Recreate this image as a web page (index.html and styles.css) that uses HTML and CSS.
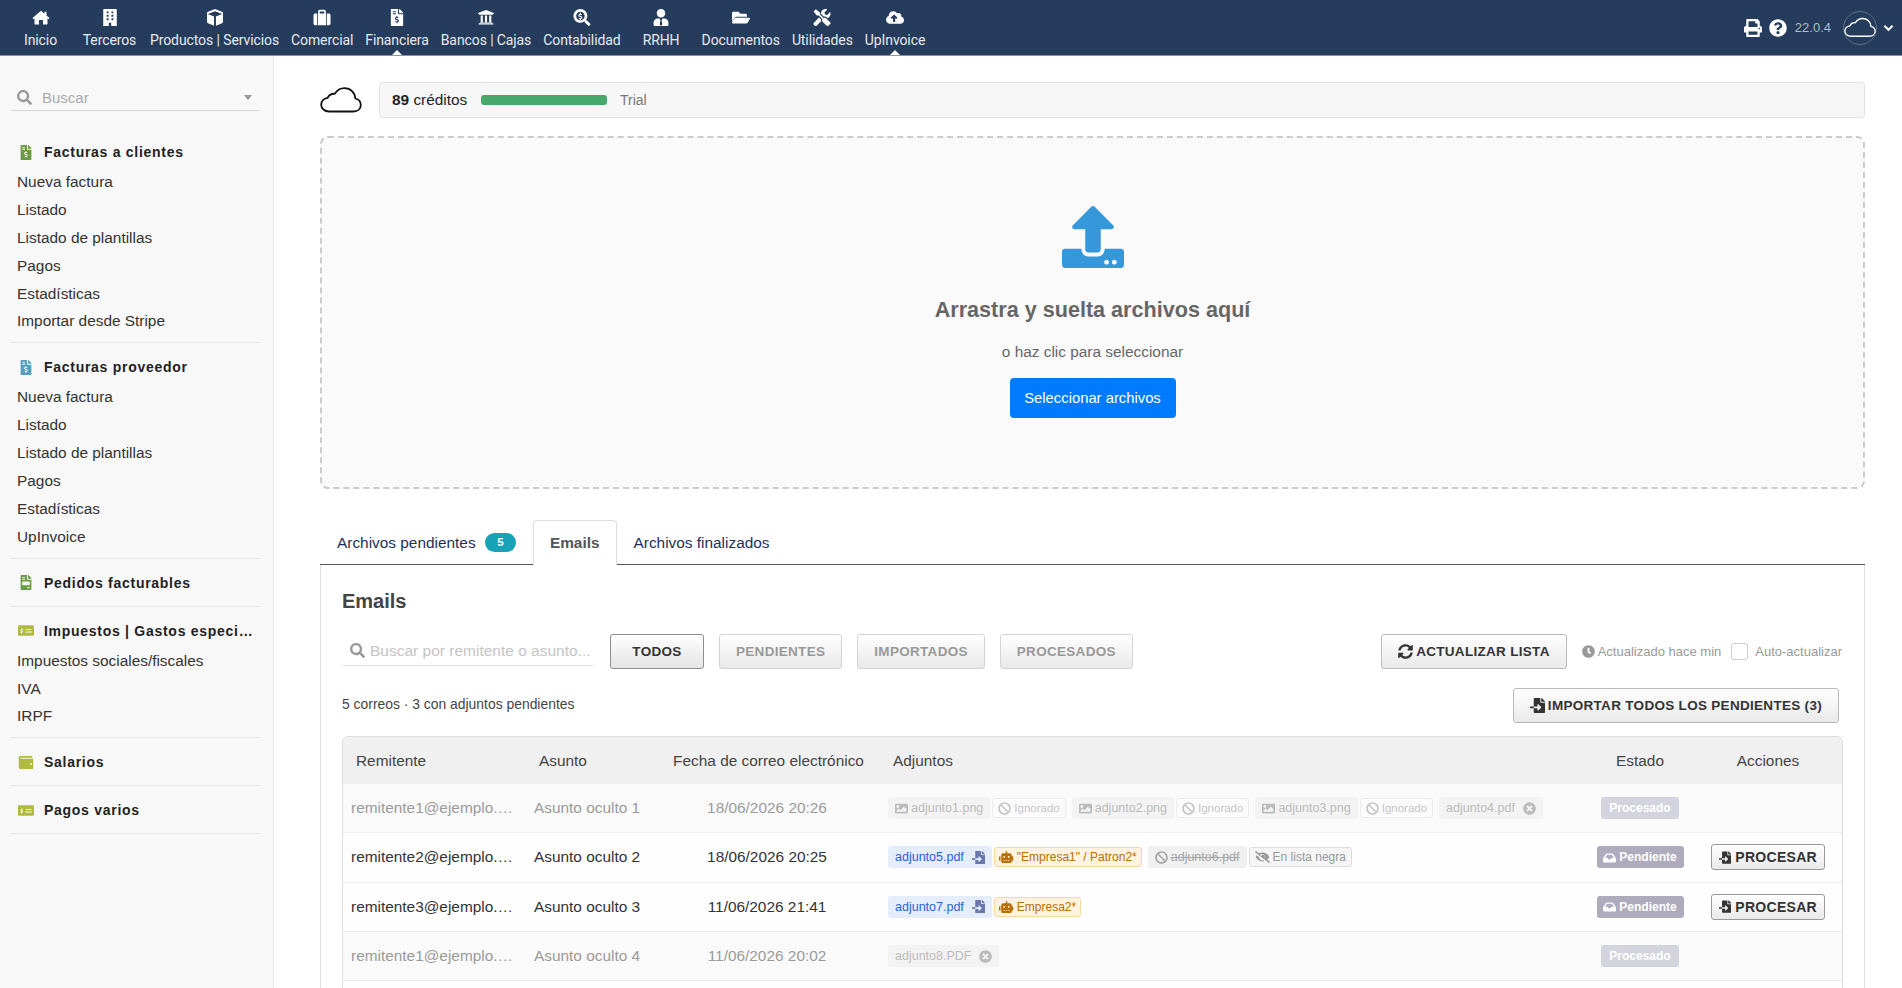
FILE: index.html
```html
<!DOCTYPE html>
<html lang="es">
<head>
    <meta charset="UTF-8">
    <title>UpInvoice - Emails</title>
    <link rel="stylesheet" href="styles.css">
</head>
<body>
    <svg class="icon-defs" width="0" height="0">
        <defs>
            <symbol id="i-file-dollar" viewBox="0 0 384 512"><path d="M377 105L279 7c-4-4-11-7-17-7h-6v128h128v-6c0-6-2-13-7-17zM224 136V0H24C11 0 0 11 0 24v464c0 13 11 24 24 24h336c13 0 24-11 24-24V160H248c-13 0-24-11-24-24zM64 72c0-4 4-8 8-8h80c4 0 8 4 8 8v16c0 4-4 8-8 8H72c-4 0-8-4-8-8V72zm0 64c0-4 4-8 8-8h80c4 0 8 4 8 8v16c0 4-4 8-8 8H72c-4 0-8-4-8-8v-16zm144 263v24c0 4-4 8-8 8h-16c-4 0-8-4-8-8v-24c-11-1-22-5-32-11-3-2-4-7-1-10l12-11c2-3 6-3 9-1 4 2 8 3 12 3h28c7 0 12-6 12-13 0-6-4-11-9-12l-45-14c-19-5-32-23-32-43 0-24 19-44 42-44v-24c0-4 4-8 8-8h16c4 0 8 4 8 8v24c11 1 22 5 32 11 3 2 4 7 1 10l-12 11c-2 3-6 3-9 1-4-2-8-3-12-3h-28c-7 0-12 6-12 13 0 6 4 11 9 12l45 14c19 5 32 23 32 43 0 24-19 44-42 44z"/></symbol>
            <symbol id="i-file-lines" viewBox="0 0 384 512"><path d="M377 105L279 7c-4-4-11-7-17-7h-6v128h128v-6c0-6-2-13-7-17zM224 136V0H24C11 0 0 11 0 24v464c0 13 11 24 24 24h336c13 0 24-11 24-24V160H248c-13 0-24-11-24-24zM64 72c0-4 4-8 8-8h80c4 0 8 4 8 8v16c0 4-4 8-8 8H72c-4 0-8-4-8-8V72zm0 64c0-4 4-8 8-8h80c4 0 8 4 8 8v16c0 4-4 8-8 8H72c-4 0-8-4-8-8v-16zM64 240c0-9 7-16 16-16h224c9 0 16 7 16 16v96c0 9-7 16-16 16H80c-9 0-16-7-16-16v-96zm256 200c0 4-4 8-8 8h-80c-4 0-8-4-8-8v-16c0-4 4-8 8-8h80c4 0 8 4 8 8v16z"/></symbol>
            <symbol id="i-money" viewBox="0 0 576 512"><path d="M528 64H48C21 64 0 85 0 112v288c0 27 21 48 48 48h480c27 0 48-21 48-48V112c0-27-21-48-48-48zM160 336h-16v16c0 4-4 8-8 8h-16c-4 0-8-4-8-8v-16H96c-4 0-8-4-8-8v-16c0-4 4-8 8-8h64c5 0 8-3 8-8s-3-8-8-8h-32c-22 0-40-18-40-40s18-40 40-40v-16c0-4 4-8 8-8h16c4 0 8 4 8 8v16h16c4 0 8 4 8 8v16c0 4-4 8-8 8h-64c-5 0-8 3-8 8s3 8 8 8h32c22 0 40 18 40 40s-18 40-40 40zm336-16c0 4-4 8-8 8H272c-4 0-8-4-8-8v-16c0-4 4-8 8-8h216c4 0 8 4 8 8v16zm0-96c0 4-4 8-8 8H272c-4 0-8-4-8-8v-16c0-4 4-8 8-8h216c4 0 8 4 8 8v16z"/></symbol>
            <symbol id="i-wallet" viewBox="0 0 512 512"><path d="M461 128H80c-9 0-16-7-16-16s7-16 16-16h384c9 0 16-7 16-16 0-27-21-48-48-48H64C29 32 0 61 0 96v320c0 35 29 64 64 64h397c28 0 51-22 51-48V176c0-26-23-48-51-48zm-29 208c-18 0-32-14-32-32s14-32 32-32 32 14 32 32-14 32-32 32z"/></symbol>
            <symbol id="i-file-import" viewBox="0 0 512 512"><path d="M16 288c-9 0-16 7-16 16v32c0 9 7 16 16 16h112v-64H16zm489-183L407 7c-5-4-11-7-17-7h-6v128h128v-6c0-6-2-13-7-17zm-153 31V0H152c-13 0-24 11-24 24v264h128v-65c0-14 17-21 27-11l96 96c6 6 6 17 0 23l-96 96c-10 10-27 3-27-11v-64H128v136c0 13 11 24 24 24h336c13 0 24-11 24-24V160H376c-13 0-24-11-24-24z"/></symbol>
            <symbol id="i-image" viewBox="0 0 512 512"><path d="M464 448H48c-27 0-48-21-48-48V112c0-27 21-48 48-48h416c27 0 48 21 48 48v288c0 27-21 48-48 48zM112 120c-31 0-56 25-56 56s25 56 56 56 56-25 56-56-25-56-56-56zM64 384h384V272l-88-88c-5-5-12-5-17 0L208 320l-56-56c-5-5-12-5-17 0l-71 72v48z"/></symbol>
            <symbol id="i-ban" viewBox="0 0 512 512"><path d="M256 8C119 8 8 119 8 256s111 248 248 248 248-111 248-248S393 8 256 8zm130 118c65 65 70 165 21 236L150 105c71-49 171-44 236 21zM126 386c-65-65-70-165-21-236l257 257c-71 49-171 44-236-21z"/></symbol>
            <symbol id="i-x-circle" viewBox="0 0 512 512"><path d="M256 8C119 8 8 119 8 256s111 248 248 248 248-111 248-248S393 8 256 8zm122 313c5 5 5 12 0 17l-40 40c-5 5-12 5-17 0l-65-66-65 66c-5 5-12 5-17 0l-40-40c-5-5-5-12 0-17l66-65-66-65c-5-5-5-12 0-17l40-40c5-5 12-5 17 0l65 66 65-66c5-5 12-5 17 0l40 40c5 5 5 12 0 17l-66 65z"/></symbol>
            <symbol id="i-robot" viewBox="0 0 640 512"><path d="M32 224h32v192H32c-18 0-32-14-32-32V256c0-18 14-32 32-32zm512-48v272c0 35-29 64-64 64H160c-35 0-64-29-64-64V176c0-44 36-80 80-80h112V32c0-18 14-32 32-32s32 14 32 32v64h112c44 0 80 36 80 80zM264 256c0-22-18-40-40-40s-40 18-40 40 18 40 40 40 40-18 40-40zm-8 128h-64v32h64v-32zm96 0h-64v32h64v-32zm104-128c0-22-18-40-40-40s-40 18-40 40 18 40 40 40 40-18 40-40zm-8 128h-64v32h64v-32zm160-128v128c0 18-14 32-32 32h-32V224h32c18 0 32 14 32 32z"/></symbol>
            <symbol id="i-eye-slash" viewBox="0 0 640 512"><path d="M320 400c-76 0-137-59-143-133L72 186c-14 17-27 36-37 56-5 10-5 19 0 29 54 106 161 177 285 177 27 0 53-4 78-10l-52-40c-9 1-17 2-26 2zm314 58L524 372c33-28 61-63 81-101 5-10 5-19 0-29-54-106-161-177-285-177-52 0-101 13-145 36L45 3c-7-5-17-4-22 3L3 31c-5 7-4 17 3 23l591 455c7 5 17 4 22-3l20-25c5-7 4-17-3-23zM450 316l-39-31c3-9 5-19 5-29 0-53-43-96-96-96-13 0-24 3-35 7l-8 9c4 8 6 16 6 24 0 7-1 14-3 20l-73-56c22-19 50-31 82-31 79 0 144 64 144 143 0 15-2 28-7 41z"/></symbol>
            <symbol id="i-inbox" viewBox="0 0 576 512"><path d="M568 276L448 96c-9-13-24-21-40-21H168c-16 0-31 8-40 21L8 276c-5 8-8 17-8 27v122c0 26 21 47 48 47h480c27 0 48-21 48-47V303c0-10-3-19-8-27zM178 139h220l85 128H376l-32 64H232l-32-64H93l85-128z"/></symbol>
        </defs>
    </svg>

    <header class="top-bar">
        <nav class="top-menu">
            <a class="menu-item">
                <svg class="menu-icon" viewBox="0 0 576 512"><path d="M288 40L16 272l32 36 32-28v184c0 9 7 16 16 16h128V336h128v144h128c9 0 16-7 16-16V280l32 28 32-36-96-82V72h-64v64z"/></svg>
                <span>Inicio</span>
            </a>
            <a class="menu-item">
                <svg class="menu-icon" viewBox="0 0 448 512"><path d="M44 0C31 0 20 11 20 24v488h168v-96h72v96h168V24c0-13-11-24-24-24zm80 72h56v56h-56zm144 0h56v56h-56zm-144 104h56v56h-56zm144 0h56v56h-56zm-144 104h56v56h-56zm144 0h56v56h-56z" fill-rule="evenodd"/></svg>
                <span>Terceros</span>
            </a>
            <a class="menu-item">
                <svg class="menu-icon" viewBox="0 0 512 512"><path d="M239 8L48 80c-19 7-32 25-32 45v262c0 18 10 35 27 43l184 75V226L40 150l216-84 216 84-187 76v279l184-75c17-8 27-25 27-43V125c0-20-13-38-32-45L273 8c-11-4-23-4-34 0z"/></svg>
                <span>Productos | Servicios</span>
            </a>
            <a class="menu-item">
                <svg class="menu-icon" viewBox="0 0 512 512"><path d="M140 136V72c0-26 21-48 48-48h136c27 0 48 22 48 48v64h92c26 0 48 22 48 48v256c0 27-22 48-48 48H400V136h-24v352H136V136h-24v352H48c-26 0-48-21-48-48V184c0-26 22-48 48-48zm48 0h136V72H188z"/></svg>
                <span>Comercial</span>
            </a>
            <a class="menu-item has-caret">
                <svg class="menu-icon" viewBox="0 0 384 512"><use href="#i-file-dollar"/></svg>
                <span>Financiera</span>
            </a>
            <a class="menu-item">
                <svg class="menu-icon" viewBox="0 0 512 512"><path d="M496 128v16c0 4-4 8-8 8h-24v12c0 7-5 12-12 12H60c-7 0-12-5-12-12v-12H24c-4 0-8-4-8-8v-16c0-3 2-6 5-7L253 33c2-1 4-1 6 0l232 88c3 1 5 4 5 7zM464 432H48c-9 0-16 7-16 16v16h448v-16c0-9-7-16-16-16zM96 192v208h-24v16h368v-16h-24V192h-64v208h-64V192h-64v208h-64V192z"/></svg>
                <span>Bancos | Cajas</span>
            </a>
            <a class="menu-item">
                <svg class="menu-icon" viewBox="0 0 512 512"><path d="M505 443L405 343c-4-4-10-7-17-7h-16c28-35 44-80 44-128C416 93 323 0 208 0S0 93 0 208s93 208 208 208c48 0 93-16 128-44v16c0 7 3 13 7 17l100 100c9 9 24 9 34 0l28-28c9-10 9-25 0-34zM208 336c-71 0-128-57-128-128S137 80 208 80s128 57 128 128-57 128-128 128zm27-120l-45-14c-5-1-9-6-9-12 0-7 5-12 12-12h28c4 0 8 1 12 3 3 2 7 2 9-1l12-11c3-3 2-8-1-10-10-6-21-10-32-11v-24c0-4-4-8-8-8h-16c-4 0-8 4-8 8v24c-23 0-42 20-42 44 0 20 13 38 32 43l45 14c5 1 9 6 9 12 0 7-5 12-12 12h-28c-4 0-8-1-12-3-3-2-7-2-9 1l-12 11c-3 3-2 8 1 10 10 6 21 10 32 11v24c0 4 4 8 8 8h16c4 0 8-4 8-8v-24c23 0 42-20 42-44 0-20-13-38-32-43z"/></svg>
                <span>Contabilidad</span>
            </a>
            <a class="menu-item">
                <svg class="menu-icon" viewBox="0 0 448 512"><path d="M224 256c71 0 128-57 128-128S295 0 224 0 96 57 96 128s57 128 128 128zm96 32l-48 0-32 48 24 120-40 56-40-56 24-120-32-48h-48C57 288 0 345 0 416v48c0 27 21 48 48 48h352c27 0 48-21 48-48v-48c0-71-57-128-128-128z"/></svg>
                <span>RRHH</span>
            </a>
            <a class="menu-item">
                <svg class="menu-icon" viewBox="0 0 576 512"><path d="M572 292l-72 124c-9 15-25 24-42 24H24c-19 0-30-20-21-36l72-124c9-15 25-24 42-24h434c19 0 30 20 21 36zM128 224h352v-48c0-27-21-48-48-48H272l-64-64H48C21 64 0 85 0 112v278l69-119c17-29 48-47 82-47z" transform="translate(0 8)"/></svg>
                <span>Documentos</span>
            </a>
            <a class="menu-item">
                <svg class="menu-icon" viewBox="0 0 512 512"><path d="M502 402L385 285c-23-23-57-28-85-14L194 165V104L67 8 3 72l96 127h61l106 106c-13 28-9 62 14 85l117 117c15 15 38 15 52 0l53-53c14-14 14-37 0-52zM332 225c28 0 55 11 75 31l19 20c16-7 31-17 44-30 37-37 50-90 37-138-2-9-14-12-20-5l-75 74-68-11-11-68 74-75c7-6 4-18-5-20-48-13-101 0-138 37-29 29-42 66-41 103l82 82c9-1 18 0 27 0zM224 315l-57-57L14 411c-19 19-19 49 0 68l20 20c19 19 49 19 68 0l134-135c-10-15-14-32-12-49z"/></svg>
                <span>Utilidades</span>
            </a>
            <a class="menu-item has-caret">
                <svg class="menu-icon" viewBox="0 0 640 512"><path d="M538 222c4-10 6-20 6-30 0-53-43-96-96-96-20 0-38 6-53 16-28-48-79-80-139-80-88 0-160 72-160 160v8C40 219 0 273 0 336c0 80 64 144 144 144h368c71 0 128-57 128-128 0-62-45-114-102-130zM393 288h-65v112c0 9-7 16-16 16h-48c-9 0-16-7-16-16V288h-65c-15 0-22-17-12-28l105-105c6-6 16-6 22 0l105 105c10 11 3 28-10 28z"/></svg>
                <span>UpInvoice</span>
            </a>
        </nav>
        <div class="top-right">
            <svg class="top-icon" viewBox="0 0 512 512"><path d="M448 192V77c0-8-3-17-9-23L393 9c-6-6-14-9-23-9H96C78 0 64 14 64 32v160c-35 0-64 29-64 64v112c0 9 7 16 16 16h48v96c0 18 14 32 32 32h320c18 0 32-14 32-32v-96h48c9 0 16-7 16-16V256c0-35-29-64-64-64zm-64 256H128v-96h256zm0-224H128V64h192v48c0 9 7 16 16 16h48zm48 72c-13 0-24-11-24-24s11-24 24-24 24 11 24 24-11 24-24 24z"/></svg>
            <svg class="top-icon" viewBox="0 0 512 512"><path d="M504 256c0 137-111 248-248 248S8 393 8 256 119 8 256 8s248 111 248 248zM263 90c-55 0-89 23-116 63-4 5-3 12 2 16l35 26c5 4 13 3 17-2 18-23 30-36 57-36 20 0 45 13 45 33 0 15-13 23-33 34-24 13-55 30-55 71v4c0 7 5 12 12 12h56c7 0 12-5 12-12v-1c0-29 83-30 83-107 0-58-60-101-115-101zm-7 248c-25 0-46 21-46 46s21 46 46 46 46-21 46-46-21-46-46-46z"/></svg>
            <span class="version">22.0.4</span>
            <span class="avatar">
                <svg viewBox="0 0 42 26"><path d="M9 24.500C4.500 24.500 1.200 21.500 1.200 17.800C1.200 14.300 3.800 11.500 7.600 10.800C9.200 7.800 11.800 6.400 14.800 6.800C17 3.200 20.400 1.200 24.500 1.200C30.500 1.200 35 5.500 35.300 11.500C38.600 12.300 40.800 14.800 40.800 18C40.800 21.800 37.800 24.500 33.500 24.500Z" fill="none" stroke="#fff" stroke-width="1.700" stroke-linejoin="round"/></svg>
            </span>
            <svg class="chevron" viewBox="0 0 12 8"><path d="M1.500 1.500L6 6l4.500-4.500" fill="none" stroke="#fff" stroke-width="2.200"/></svg>
        </div>
    </header>

    <div class="layout">
        <aside class="sidebar">
            <div class="side-search">
                <svg class="side-search-icon" viewBox="0 0 512 512"><path d="M505 443L405 343c-4-4-10-7-17-7h-16c28-35 44-80 44-128C416 93 323 0 208 0S0 93 0 208s93 208 208 208c48 0 93-16 128-44v16c0 7 3 13 7 17l100 100c9 9 24 9 34 0l28-28c9-10 9-25 0-34zM208 336c-71 0-128-57-128-128S137 80 208 80s128 57 128 128-57 128-128 128z"/></svg>
                <span class="side-search-text">Buscar</span>
                <span class="side-search-caret"></span>
            </div>

            <section class="side-group">
                <div class="side-title"><svg class="side-icon green" viewBox="0 0 384 512"><use href="#i-file-dollar"/></svg><span>Facturas a clientes</span></div>
                <a class="side-link">Nueva factura</a>
                <a class="side-link">Listado</a>
                <a class="side-link">Listado de plantillas</a>
                <a class="side-link">Pagos</a>
                <a class="side-link">Estadísticas</a>
                <a class="side-link">Importar desde Stripe</a>
            </section>
            <section class="side-group">
                <div class="side-title"><svg class="side-icon blue" viewBox="0 0 384 512"><use href="#i-file-dollar"/></svg><span>Facturas proveedor</span></div>
                <a class="side-link">Nueva factura</a>
                <a class="side-link">Listado</a>
                <a class="side-link">Listado de plantillas</a>
                <a class="side-link">Pagos</a>
                <a class="side-link">Estadísticas</a>
                <a class="side-link">UpInvoice</a>
            </section>
            <section class="side-group">
                <div class="side-title"><svg class="side-icon green" viewBox="0 0 384 512"><use href="#i-file-lines"/></svg><span>Pedidos facturables</span></div>
            </section>
            <section class="side-group">
                <div class="side-title"><svg class="side-icon olive" viewBox="0 0 576 512"><use href="#i-money"/></svg><span>Impuestos | Gastos especiales</span></div>
                <a class="side-link">Impuestos sociales/fiscales</a>
                <a class="side-link">IVA</a>
                <a class="side-link">IRPF</a>
            </section>
            <section class="side-group">
                <div class="side-title"><svg class="side-icon olive" viewBox="0 0 512 512"><use href="#i-wallet"/></svg><span>Salarios</span></div>
            </section>
            <section class="side-group">
                <div class="side-title"><svg class="side-icon olive" viewBox="0 0 576 512"><use href="#i-money"/></svg><span>Pagos varios</span></div>
            </section>
        </aside>

        <main class="content">
            <div class="credits-row">
                <svg class="credits-cloud" viewBox="0 0 42 26"><path d="M9 24.500C4.500 24.500 1.200 21.500 1.200 17.800C1.200 14.300 3.800 11.500 7.600 10.800C9.200 7.800 11.800 6.400 14.800 6.800C17 3.200 20.400 1.200 24.500 1.200C30.500 1.200 35 5.500 35.300 11.500C38.600 12.300 40.800 14.800 40.800 18C40.800 21.800 37.800 24.500 33.500 24.500Z" fill="none" stroke="#111" stroke-width="1.800" stroke-linejoin="round"/></svg>
                <div class="credits-box">
                    <span class="credits-text"><b>89</b> créditos</span>
                    <span class="credits-bar"></span>
                    <span class="credits-plan">Trial</span>
                </div>
            </div>

            <div class="dropzone">
                <svg class="drop-icon" viewBox="0 0 512 512"><path d="M296 384h-80c-13 0-24-11-24-24V192h-88c-18 0-27-22-14-34L242 7c8-8 20-8 28 0l152 151c13 12 4 34-14 34h-88v168c0 13-11 24-24 24zm216-8v112c0 13-11 24-24 24H24c-13 0-24-11-24-24V376c0-13 11-24 24-24h136v8c0 31 25 56 56 56h80c31 0 56-25 56-56v-8h136c13 0 24 11 24 24zm-124 88c0-11-9-20-20-20s-20 9-20 20 9 20 20 20 20-9 20-20zm64 0c0-11-9-20-20-20s-20 9-20 20 9 20 20 20 20-9 20-20z"/></svg>
                <h3 class="drop-title">Arrastra y suelta archivos aquí</h3>
                <p class="drop-sub">o haz clic para seleccionar</p>
                <button class="drop-button">Seleccionar archivos</button>
            </div>

            <div class="tabs">
                <a class="tab">Archivos pendientes <span class="tab-badge">5</span></a>
                <a class="tab active">Emails</a>
                <a class="tab">Archivos finalizados</a>
            </div>

            <div class="tab-panel">
                <h2 class="panel-title">Emails</h2>

                <div class="toolbar">
                    <div class="mail-search">
                        <svg class="mail-search-icon" viewBox="0 0 512 512"><path d="M505 443L405 343c-4-4-10-7-17-7h-16c28-35 44-80 44-128C416 93 323 0 208 0S0 93 0 208s93 208 208 208c48 0 93-16 128-44v16c0 7 3 13 7 17l100 100c9 9 24 9 34 0l28-28c9-10 9-25 0-34zM208 336c-71 0-128-57-128-128S137 80 208 80s128 57 128 128-57 128-128 128z"/></svg>
                        <span>Buscar por remitente o asunto...</span>
                    </div>
                    <button class="btn filter active">TODOS</button>
                    <button class="btn filter">PENDIENTES</button>
                    <button class="btn filter">IMPORTADOS</button>
                    <button class="btn filter">PROCESADOS</button>
                    <div class="toolbar-right">
                        <button class="btn">
                            <svg class="btn-icon" viewBox="0 0 512 512"><path d="M370 133c-32-30-73-46-116-45-78 1-145 54-164 126-1 5-6 9-11 9H22c-8 0-13-7-12-14C32 91 134 8 256 8c67 0 128 26 173 70l36-36c15-15 41-4 41 17v135c0 13-11 24-24 24H347c-21 0-32-26-17-41zM32 296h135c21 0 32 26 17 41l-42 42c32 30 73 46 116 45 78-1 145-54 164-126 1-5 6-9 11-9h57c8 0 13 7 12 14-22 118-124 201-246 201-67 0-128-26-173-70l-36 36c-15 15-41 4-41-17V320c0-13 11-24 24-24z"/></svg>
                            ACTUALIZAR LISTA
                        </button>
                        <span class="updated">
                            <svg class="clock" viewBox="0 0 512 512"><path d="M256 8C119 8 8 119 8 256s111 248 248 248 248-111 248-248S393 8 256 8zm57 350l-88-64c-3-2-5-6-5-10V116c0-7 5-12 12-12h48c7 0 12 5 12 12v138l64 46c5 4 6 11 2 17l-28 39c-4 5-11 6-17 2z"/></svg>
                            Actualizado hace min
                        </span>
                        <span class="auto-check"></span>
                        <span class="auto-label">Auto-actualizar</span>
                    </div>
                </div>

                <div class="summary-row">
                    <span class="summary">5 correos · 3 con adjuntos pendientes</span>
                    <button class="btn">
                        <svg class="btn-icon" viewBox="0 0 512 512"><use href="#i-file-import"/></svg>
                        IMPORTAR TODOS LOS PENDIENTES (3)
                    </button>
                </div>

                <table class="mail-table">
                    <colgroup>
                        <col class="col-from"><col class="col-subject"><col class="col-date"><col class="col-files"><col class="col-state"><col class="col-actions">
                    </colgroup>
                    <thead>
                        <tr>
                            <th>Remitente</th>
                            <th>Asunto</th>
                            <th class="center date">Fecha de correo electrónico</th>
                            <th>Adjuntos</th>
                            <th class="center">Estado</th>
                            <th class="center">Acciones</th>
                        </tr>
                    </thead>
                    <tbody>
                        <tr class="done">
                            <td class="ellipsis">remitente1@ejemplo.com</td>
                            <td>Asunto oculto 1</td>
                            <td class="center date">18/06/2026 20:26</td>
                            <td>
                                <div class="files">
                                    <span class="chip muted"><svg class="ic"><use href="#i-image"/></svg>adjunto1.png</span><span class="tag faint"><svg class="ic"><use href="#i-ban"/></svg>Ignorado</span>
                                    <span class="chip muted sep"><svg class="ic"><use href="#i-image"/></svg>adjunto2.png</span><span class="tag faint"><svg class="ic"><use href="#i-ban"/></svg>Ignorado</span>
                                    <span class="chip muted sep"><svg class="ic"><use href="#i-image"/></svg>adjunto3.png</span><span class="tag faint"><svg class="ic"><use href="#i-ban"/></svg>Ignorado</span>
                                    <span class="chip muted sep">adjunto4.pdf<svg class="ic after"><use href="#i-x-circle"/></svg></span>
                                </div>
                            </td>
                            <td class="center"><span class="state processed">Procesado</span></td>
                            <td></td>
                        </tr>
                        <tr>
                            <td class="ellipsis">remitente2@ejemplo.com</td>
                            <td>Asunto oculto 2</td>
                            <td class="center date">18/06/2026 20:25</td>
                            <td>
                                <div class="files">
                                    <span class="chip pending">adjunto5.pdf<svg class="ic after"><use href="#i-file-import"/></svg></span><span class="tag match"><svg class="ic wide"><use href="#i-robot"/></svg>"Empresa1" / Patron2*</span>
                                    <span class="chip blocked sep"><svg class="ic"><use href="#i-ban"/></svg><s>adjunto6.pdf</s></span><span class="tag black"><svg class="ic wide"><use href="#i-eye-slash"/></svg>En lista negra</span>
                                </div>
                            </td>
                            <td class="center"><span class="state waiting"><svg class="ic"><use href="#i-inbox"/></svg>Pendiente</span></td>
                            <td class="center"><button class="btn small"><svg class="btn-icon"><use href="#i-file-import"/></svg>PROCESAR</button></td>
                        </tr>
                        <tr>
                            <td class="ellipsis">remitente3@ejemplo.com</td>
                            <td>Asunto oculto 3</td>
                            <td class="center date">11/06/2026 21:41</td>
                            <td>
                                <div class="files">
                                    <span class="chip pending">adjunto7.pdf<svg class="ic after"><use href="#i-file-import"/></svg></span><span class="tag match"><svg class="ic wide"><use href="#i-robot"/></svg>Empresa2*</span>
                                </div>
                            </td>
                            <td class="center"><span class="state waiting"><svg class="ic"><use href="#i-inbox"/></svg>Pendiente</span></td>
                            <td class="center"><button class="btn small"><svg class="btn-icon"><use href="#i-file-import"/></svg>PROCESAR</button></td>
                        </tr>
                        <tr class="done">
                            <td class="ellipsis">remitente1@ejemplo.com</td>
                            <td>Asunto oculto 4</td>
                            <td class="center date">11/06/2026 20:02</td>
                            <td>
                                <div class="files">
                                    <span class="chip muted">adjunto8.PDF<svg class="ic after"><use href="#i-x-circle"/></svg></span>
                                </div>
                            </td>
                            <td class="center"><span class="state processed">Procesado</span></td>
                            <td></td>
                        </tr>
                        <tr>
                            <td colspan="6"></td>
                        </tr>
                    </tbody>
                </table>
            </div>
        </main>
    </div>
</body>
</html>
```

FILE: styles.css
```css
* {
    margin: 0;
    padding: 0;
    box-sizing: border-box;
}

html, body {
    height: 100%;
    overflow: hidden;
}

body {
    font-family: "Liberation Sans", Arial, sans-serif;
    font-size: 14px;
    color: #333333;
    background: #ffffff;
}

.icon-defs {
    position: absolute;
}

/* top bar */
.top-bar {
    height: 56px;
    background: #263c5c;
    border-bottom: 1px solid #8a93a0;
    display: flex;
    justify-content: space-between;
    align-items: stretch;
    padding-left: 6px;
}

.top-menu {
    display: flex;
}

.menu-item {
    position: relative;
    min-width: 69px;
    padding: 9px 6px 0;
    display: flex;
    flex-direction: column;
    align-items: center;
    color: #e6e9ee;
    font-family: Roboto, sans-serif;
    font-size: 14px;
    letter-spacing: -0.1px;
    white-space: nowrap;
}

.menu-icon {
    width: 18px;
    height: 17px;
    fill: #ffffff;
    margin-bottom: 6px;
}

.has-caret::after {
    content: '';
    position: absolute;
    left: 50%;
    bottom: 0;
    margin-left: -5px;
    border-left: 5px solid transparent;
    border-right: 5px solid transparent;
    border-bottom: 5px solid #ffffff;
}

.top-right {
    display: flex;
    align-items: center;
    padding-right: 8px;
}

.top-icon {
    width: 18px;
    height: 18px;
    fill: #ffffff;
    margin-right: 7px;
}

.version {
    color: #b4bbc6;
    font-size: 13px;
    margin-left: 1px;
    margin-right: 12px;
}

.avatar {
    width: 34px;
    height: 34px;
    border-radius: 50%;
    border: 1px solid #5d6f89;
    display: flex;
    align-items: center;
    justify-content: center;
}

.avatar svg {
    width: 34px;
    height: 21px;
}

.chevron {
    width: 11px;
    height: 8px;
    margin-left: 6px;
}

/* layout */
.layout {
    display: flex;
    height: calc(100% - 56px);
}

.sidebar {
    width: 274px;
    flex-shrink: 0;
    background: #f8f8f8;
    border-right: 1px solid #e8e8e8;
    padding: 29px 8px 0 10px;
}

.side-search {
    height: 26px;
    display: flex;
    align-items: center;
    border-bottom: 1px solid #d5d5d5;
    border-radius: 0 0 3px 3px;
    padding: 0 7px;
    color: #aaaaaa;
    margin-bottom: 17px;
    margin-right: 5px;
}

.side-search-icon {
    width: 15px;
    height: 15px;
    fill: #9a9a9a;
    margin-right: 10px;
}

.side-search-text {
    flex: 1;
    font-size: 15px;
}

.side-search-caret {
    border-left: 4px solid transparent;
    border-right: 4px solid transparent;
    border-top: 5px solid #999999;
    margin-right: 1px;
}

.side-group {
    padding: 10px 0 7px;
    margin-right: 5px;
    border-bottom: 1px solid #e6e6e6;
}

.side-title {
    display: flex;
    align-items: center;
    height: 28px;
    margin-bottom: 2px;
    font-weight: bold;
    font-size: 14px;
    letter-spacing: 0.72px;
    color: #222222;
    padding-left: 8px;
}

.side-title span {
    overflow: hidden;
    text-overflow: ellipsis;
    white-space: nowrap;
    width: 212px;
}

.side-icon {
    width: 16px;
    height: 15px;
    margin-right: 10px;
    flex-shrink: 0;
}

.green { fill: #6b9b45; }
.blue { fill: #5a9fc0; }
.olive { fill: #b0bb3e; }

.side-link {
    display: block;
    height: 27.9px;
    line-height: 27.9px;
    padding-left: 7px;
    font-size: 15.4px;
    color: #333333;
}

/* main */
.content {
    flex: 1;
    min-width: 0;
    padding: 26px 37px 0 46px;
    background: #ffffff;
}

.credits-row {
    display: flex;
    align-items: center;
    gap: 17px;
    margin-bottom: 18px;
}

.credits-cloud {
    width: 42px;
    height: 26px;
    flex-shrink: 0;
}

.credits-box {
    flex: 1;
    height: 36px;
    background: #f7f7f7;
    border: 1px solid #e2e2e2;
    border-radius: 4px;
    display: flex;
    align-items: center;
    padding-left: 12px;
}

.credits-text {
    font-size: 15.4px;
    color: #222222;
    width: 89px;
    white-space: nowrap;
}

.credits-bar {
    width: 126px;
    height: 10px;
    background: #46a86a;
    border-radius: 3px;
    margin-right: 13px;
}

.credits-plan {
    color: #777777;
    font-size: 14px;
}

.dropzone {
    height: 353px;
    border: 2px dashed #cccccc;
    border-radius: 8px;
    background: #fafafa;
    display: flex;
    flex-direction: column;
    align-items: center;
    padding-top: 68px;
}

.drop-icon {
    width: 62px;
    height: 62px;
    fill: #3498db;
    margin-bottom: 28px;
}

.drop-title {
    font-size: 21.6px;
    line-height: 28px;
    color: #666666;
    margin-bottom: 18px;
}

.drop-sub {
    font-size: 15.4px;
    line-height: 20px;
    color: #666666;
    margin-bottom: 16px;
}

.drop-button {
    width: 166px;
    height: 40px;
    background: #007bff;
    color: #ffffff;
    border: none;
    border-radius: 4px;
    font-family: inherit;
    font-size: 14.8px;
}

/* tabs */
.tabs {
    display: flex;
    margin-top: 31px;
    height: 45px;
    border-bottom: 1px solid #555555;
}

.tab {
    display: flex;
    align-items: center;
    height: 45px;
    padding: 0 17px;
    color: #1f2f5c;
    font-size: 15.4px;
    white-space: pre;
}

.tab.active {
    background: #ffffff;
    border: 1px solid #dddddd;
    border-bottom: none;
    border-radius: 4px 4px 0 0;
    font-weight: bold;
    color: #555555;
    padding: 0 16px;
    z-index: 1;
}

.tab-badge {
    background: #17a2b8;
    color: #ffffff;
    font-size: 11.5px;
    font-weight: bold;
    width: 31px;
    height: 19px;
    line-height: 19px;
    border-radius: 10px;
    text-align: center;
    margin-left: 5px;
}

.tab-panel {
    border-left: 1px solid #e2e2e2;
    border-right: 1px solid #e2e2e2;
    padding: 0 21px;
    height: 423px;
    overflow: hidden;
}

.panel-title {
    font-size: 20px;
    line-height: 24px;
    color: #444444;
    padding-top: 24px;
    height: 68px;
}

.toolbar {
    display: flex;
    align-items: center;
    height: 36px;
}

.mail-search {
    width: 252px;
    height: 30px;
    display: flex;
    align-items: center;
    border-bottom: 1px solid #dddddd;
    border-radius: 0 0 3px 3px;
    padding-left: 8px;
    color: #c4c4c4;
    font-size: 15.5px;
    margin-right: 16px;
    white-space: nowrap;
    overflow: hidden;
}

.mail-search-icon {
    width: 15px;
    height: 15px;
    fill: #999999;
    margin-right: 5px;
    flex-shrink: 0;
}

.btn {
    height: 35px;
    padding: 0 16px;
    border: 1px solid #bbbbbb;
    border-radius: 3px;
    background: linear-gradient(#ffffff, #e9e9e9);
    font-family: inherit;
    font-size: 13.5px;
    font-weight: bold;
    letter-spacing: 0.3px;
    color: #333333;
    display: inline-flex;
    align-items: center;
    justify-content: center;
    white-space: nowrap;
}

.btn-icon {
    width: 15px;
    height: 15px;
    fill: #333333;
    margin-right: 3px;
}

.filter {
    min-width: 94px;
    margin-right: 15px;
    color: #999999;
    border-color: #d4d4d4;
}

.filter.active {
    color: #333333;
    border-color: #8e8e8e;
    background: linear-gradient(#ffffff, #e4e4e4);
}

.toolbar-right {
    margin-left: auto;
    display: flex;
    align-items: center;
    padding-right: 1px;
}

.updated {
    color: #999999;
    font-size: 13px;
    margin-left: 15px;
    display: flex;
    align-items: center;
    white-space: nowrap;
}

.clock {
    width: 13px;
    height: 13px;
    fill: #999999;
    margin-right: 3px;
}

.auto-check {
    width: 17px;
    height: 17px;
    border: 1px solid #cccccc;
    border-radius: 3px;
    margin-left: 10px;
    background: #ffffff;
}

.auto-label {
    color: #999999;
    font-size: 13px;
    margin-left: 7px;
    white-space: nowrap;
}

.summary-row {
    display: flex;
    align-items: center;
    justify-content: space-between;
    height: 35px;
    margin-top: 19px;
    padding-right: 4px;
    margin-bottom: 13px;
}

.summary {
    font-size: 13.9px;
    color: #444444;
    margin-bottom: 3px;
}

/* mail table */
.mail-table {
    width: 100%;
    table-layout: fixed;
    border-collapse: separate;
    border-spacing: 0;
    border: 1px solid #dddddd;
    border-bottom: none;
    border-radius: 6px 6px 0 0;
}

.col-from { width: 183px; }
.col-subject { width: 133px; }
.col-date { width: 221px; }
.col-state { width: 108px; }
.col-actions { width: 148px; }

.mail-table th {
    height: 47px;
    background: #f0f0f0;
    font-weight: normal;
    text-align: left;
    padding-left: 13px;
    font-size: 15.4px;
    color: #444444;
}

.mail-table th:first-child {
    border-radius: 6px 0 0 0;
}

.mail-table th:last-child {
    border-radius: 0 6px 0 0;
}

.mail-table th.center,
.mail-table td.center {
    text-align: center;
    padding-left: 0;
}

.mail-table th.date {
    padding-right: 2px;
}

.mail-table td.date {
    padding-right: 5px;
}

.mail-table td {
    height: 49.3px;
    padding-left: 8px;
    font-size: 15.4px;
    color: #333333;
    background: #fefefe;
    border-bottom: 1px solid #efefef;
    white-space: nowrap;
}

.mail-table tr.done td {
    background: #fafafa;
    color: #9a9a9a;
}

.mail-table td.ellipsis {
    overflow: hidden;
    text-overflow: ellipsis;
    padding-right: 12px;
}

.files {
    display: flex;
    align-items: center;
}

.ic {
    width: 13px;
    height: 13px;
    fill: currentColor;
    margin-right: 3px;
    flex-shrink: 0;
}

.ic.after {
    margin-right: 0;
    margin-left: 8px;
}

.ic.wide {
    width: 15px;
    height: 14px;
}

.chip {
    display: inline-flex;
    align-items: center;
    height: 22px;
    padding: 0 7px;
    border-radius: 3px;
    font-size: 12.5px;
    margin-right: 2px;
}

.chip.sep {
    margin-left: 6px;
}

.chip.muted {
    background: #f3f3f3;
    color: #bbbbbb;
}

.chip.pending {
    background: #e5edfb;
    color: #2563d8;
}

.chip.pending .ic {
    color: #6a77ab;
}

.chip.blocked {
    background: #f0f0f0;
    color: #a6a6a6;
}

.tag {
    display: inline-flex;
    align-items: center;
    height: 20px;
    padding: 0 5px;
    border: 1px solid transparent;
    border-radius: 3px;
    font-size: 11.5px;
}

.tag.faint {
    background: #fbfbfb;
    border-color: #ececec;
    color: #c6c6c6;
}

.tag.match {
    background: #fff3e0;
    border-color: #f4d8a0;
    color: #b86e00;
    font-size: 12px;
    padding: 0 4px;
}

.tag.black {
    background: #f5f5f5;
    border-color: #dedede;
    color: #999999;
    font-size: 12px;
}

.state {
    display: inline-flex;
    align-items: center;
    justify-content: center;
    height: 22px;
    border-radius: 3px;
    color: #ffffff;
    font-size: 12px;
    font-weight: bold;
}

.state.processed {
    width: 78px;
    background: #d4d4de;
}

.state.waiting {
    width: 87px;
    background: #adabbc;
}

.btn.small {
    height: 26px;
    padding: 0 7px;
    font-size: 14px;
    letter-spacing: 0.3px;
    width: 114px;
    border-color: #999999;
}

.btn.small .btn-icon {
    width: 17px;
    height: 17px;
    margin-right: 4px;
}
```
